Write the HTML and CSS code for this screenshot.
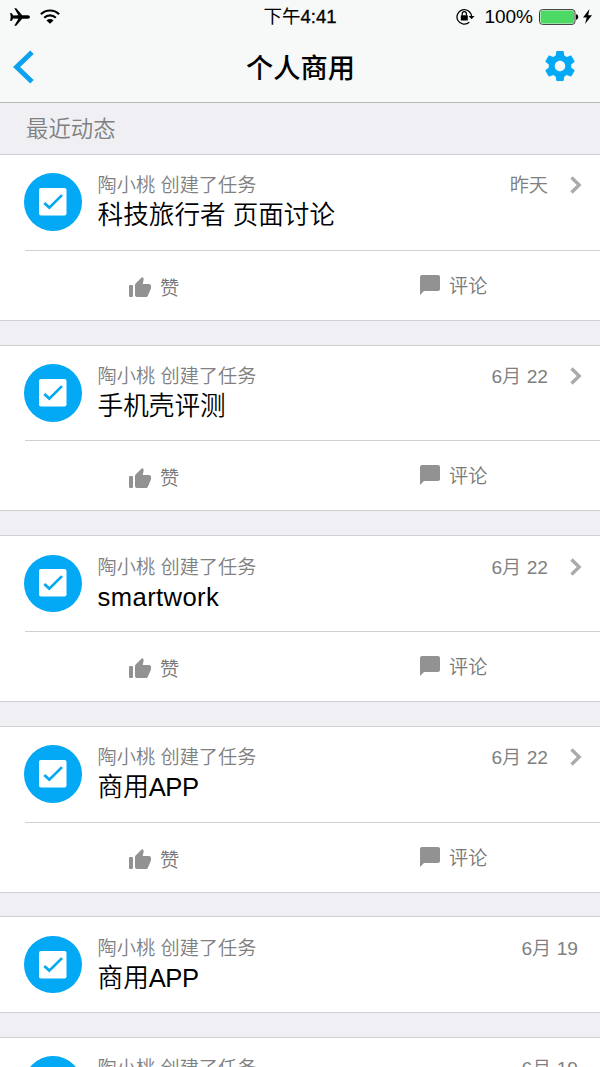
FILE: index.html
```html
<!DOCTYPE html>
<html lang="zh-CN">
<head>
    <meta charset="UTF-8">
    <meta name="viewport" content="width=device-width, initial-scale=1.0">
    <title>个人商用</title>
    <link rel="stylesheet" href="styles.css">
</head>
<body>
    <!-- Shared icons -->
    <svg class="sprite" width="0" height="0">
        <symbol id="icon-task" viewBox="0 0 28 28">
            <rect width="27.5" height="27.5" rx="2" fill="#fff"/>
            <path d="M5.3 14.900l5 4.700L23 7.100" fill="none" stroke="#03a9f4" stroke-width="2.700"/>
        </symbol>
        <symbol id="icon-like" viewBox="1 1 22 20">
            <path d="M2 9h2q1 0 1 1v10q0 1-1 1H2q-1 0-1-1V10q0-1 1-1zm21 1c0-1.100-.9-2-2-2h-6.310l.95-4.570.03-.32c0-.41-.17-.79-.44-1.060L14.170 1 7.590 7.590C7.220 7.950 7 8.450 7 9v10c0 1.100.9 2 2 2h9c.83 0 1.540-.5 1.840-1.220l3.020-7.050c.09-.23.14-.47.14-.73v-2z"/>
        </symbol>
        <symbol id="icon-comment" viewBox="2 2 20 20">
            <path d="M20 2H4c-1.100 0-2 .9-2 2v18l4-4h14c1.100 0 2-.9 2-2V4c0-1.100-.9-2-2-2z"/>
        </symbol>
        <symbol id="icon-arrow" viewBox="0 0 12 18">
            <path d="M1.500 1.500L9.200 9l-7.700 7.500" fill="none" stroke="#aaa" stroke-width="3.300"/>
        </symbol>
    </svg>

    <header class="header">
        <div class="status-bar">
            <div class="status-left">
                <svg class="plane" viewBox="0 0 20 18">
                    <path d="M.2 5h1.300l1.800 2.500 5.100-.2L4.300.2h1.900l6 7.100h5.700c1.200 0 2 .8 2 1.700s-.8 1.700-2 1.700h-5.700l-6 7.100H4.300l4.100-7.100-5.100-.2L1.500 13H.2l.5-4z"/>
                </svg>
                <svg class="wifi" viewBox="0 0 20 15">
                    <path d="M.9 5.200a13 13 0 0 1 18.200 0M4.200 8.700a8.300 8.300 0 0 1 11.600 0" fill="none" stroke="#000" stroke-width="2.200"/>
                    <path d="M6.500 11.400a5 5 0 0 1 7 0L10 14.800z"/>
                </svg>
            </div>
            <div class="status-time">下午<span>4:41</span></div>
            <div class="status-right">
                <svg class="lock" viewBox="0 0 19 17">
                    <path d="M13.300 14.200a7.300 7.300 0 1 1 2.300-5.700" fill="none" stroke="#000" stroke-width="1.300"/>
                    <path d="M12.700 8h5.800l-2.900 3.300z"/>
                    <rect x="4.800" y="7.200" width="7" height="5.300" rx=".5"/>
                    <path d="M6.200 7.500V5.800a2.100 2.100 0 0 1 4.200 0v1.700" fill="none" stroke="#000" stroke-width="1.200"/>
                </svg>
                <span class="percent">100%</span>
                <svg class="battery" viewBox="0 0 40 16">
                    <rect x=".5" y=".6" width="35.500" height="14.800" rx="3" fill="#fff" stroke="#333"/>
                    <rect x="1.500" y="1.600" width="33.500" height="12.800" rx="2" fill="#4cd964"/>
                    <path d="M37 5.300c1.500.2 2.200 1.200 2.200 2.700s-.7 2.500-2.200 2.700z"/>
                </svg>
                <svg class="bolt" viewBox="0 0 9 15">
                    <path d="M6.500 0L0 8.400h3.700L2 15l7-8.700H5.200z"/>
                </svg>
            </div>
        </div>
        <nav class="nav-bar">
            <svg class="back" viewBox="0 0 21 34">
                <path d="M19 2.200L3.600 17 19 31.800" fill="none" stroke="#0da2ee" stroke-width="5"/>
            </svg>
            <h1>个人商用</h1>
            <svg class="settings" viewBox="2 2 20 20">
                <path d="M19.430 12.980c.04-.32.07-.64.07-.98s-.03-.66-.07-.98l2.110-1.650c.19-.15.24-.42.12-.64l-2-3.460c-.12-.22-.39-.3-.61-.22l-2.490 1c-.52-.4-1.080-.73-1.690-.98l-.38-2.650C14.460 2.180 14.250 2 14 2h-4c-.25 0-.46.18-.49.42l-.38 2.650c-.61.25-1.170.59-1.690.98l-2.490-1c-.23-.09-.49 0-.61.22l-2 3.460c-.13.22-.07.49.12.64l2.110 1.650c-.04.32-.07.65-.07.98s.03.66.07.98l-2.110 1.650c-.19.15-.24.42-.12.64l2 3.460c.12.22.39.3.61.22l2.490-1c.52.4 1.080.73 1.690.98l.38 2.650c.03.24.24.42.49.42h4c.25 0 .46-.18.49-.42l.38-2.650c.61-.25 1.170-.59 1.690-.98l2.490 1c.23.09.49 0 .61-.22l2-3.460c.12-.22.07-.49-.12-.64l-2.110-1.650zM12 15.500c-1.930 0-3.500-1.570-3.500-3.500s1.570-3.500 3.500-3.500 3.500 1.570 3.500 3.500-1.570 3.500-3.500 3.500z"/>
            </svg>
        </nav>
    </header>

    <main>
        <h2 class="section-title">最近动态</h2>

        <article class="card">
            <div class="card-body">
                <div class="avatar"><svg><use href="#icon-task"/></svg></div>
                <div class="info">
                    <p class="meta">陶小桃 创建了任务</p>
                    <p class="title">科技旅行者 页面讨论</p>
                </div>
                <div class="date">昨天</div>
                <svg class="arrow"><use href="#icon-arrow"/></svg>
            </div>
            <div class="actions">
                <div class="like"><svg><use href="#icon-like"/></svg>赞</div>
                <div class="comment"><svg><use href="#icon-comment"/></svg>评论</div>
            </div>
        </article>

        <article class="card">
            <div class="card-body">
                <div class="avatar"><svg><use href="#icon-task"/></svg></div>
                <div class="info">
                    <p class="meta">陶小桃 创建了任务</p>
                    <p class="title">手机壳评测</p>
                </div>
                <div class="date">6月 22</div>
                <svg class="arrow"><use href="#icon-arrow"/></svg>
            </div>
            <div class="actions">
                <div class="like"><svg><use href="#icon-like"/></svg>赞</div>
                <div class="comment"><svg><use href="#icon-comment"/></svg>评论</div>
            </div>
        </article>

        <article class="card">
            <div class="card-body">
                <div class="avatar"><svg><use href="#icon-task"/></svg></div>
                <div class="info">
                    <p class="meta">陶小桃 创建了任务</p>
                    <p class="title latin">smartwork</p>
                </div>
                <div class="date">6月 22</div>
                <svg class="arrow"><use href="#icon-arrow"/></svg>
            </div>
            <div class="actions">
                <div class="like"><svg><use href="#icon-like"/></svg>赞</div>
                <div class="comment"><svg><use href="#icon-comment"/></svg>评论</div>
            </div>
        </article>

        <article class="card">
            <div class="card-body">
                <div class="avatar"><svg><use href="#icon-task"/></svg></div>
                <div class="info">
                    <p class="meta">陶小桃 创建了任务</p>
                    <p class="title">商用<span class="app">APP</span></p>
                </div>
                <div class="date">6月 22</div>
                <svg class="arrow"><use href="#icon-arrow"/></svg>
            </div>
            <div class="actions">
                <div class="like"><svg><use href="#icon-like"/></svg>赞</div>
                <div class="comment"><svg><use href="#icon-comment"/></svg>评论</div>
            </div>
        </article>

        <article class="card">
            <div class="card-body">
                <div class="avatar"><svg><use href="#icon-task"/></svg></div>
                <div class="info">
                    <p class="meta">陶小桃 创建了任务</p>
                    <p class="title">商用<span class="app">APP</span></p>
                </div>
                <div class="date">6月 19</div>
            </div>
        </article>

        <article class="card">
            <div class="card-body">
                <div class="avatar"><svg><use href="#icon-task"/></svg></div>
                <div class="info">
                    <p class="meta">陶小桃 创建了任务</p>
                </div>
                <div class="date">6月 19</div>
            </div>
        </article>
    </main>
</body>
</html>
```

FILE: styles.css
```css
:root {
    --blue: #03a9f4;
    --gray: #808080;
    --icon-gray: #929292;
    --bg-color: #efeff4;
    --line: #d0d0d3;
}

* {
    box-sizing: border-box;
}

body {
    margin: 0;
    height: 1067px;
    overflow: hidden;
    background-color: var(--bg-color);
    font-family: "Liberation Sans", "Noto Sans CJK SC", sans-serif;
    color: #000;
}

h1, h2, p {
    margin: 0;
}

svg {
    display: block;
    flex: none;
}

.sprite {
    position: absolute;
}

/* Header */
.header {
    height: 103px;
    background-color: #f7f8f8;
    border-bottom: 1px solid #b9b9bb;
}

.status-bar {
    display: grid;
    grid-template-columns: 1fr auto 1fr;
    align-items: center;
    height: 32px;
    padding: 0 8px 0 10px;
    font-size: 19px;
    line-height: 32px;
}

.status-left,
.status-right {
    display: flex;
    align-items: center;
}

.status-right {
    justify-content: flex-end;
}

.status-time {
    font-size: 18.5px;
    font-weight: 400;
    padding-top: 1px;
    margin-left: -2px;
}

.status-time span {
    -webkit-text-stroke: 0.3px #000;
}

.plane {
    width: 20px;
    height: 18px;
    margin-right: 10px;
}

.wifi {
    width: 20px;
    height: 15px;
}

.lock {
    width: 19px;
    height: 17px;
    margin-right: 9px;
}

.percent {
    margin-right: 6px;
    padding-top: 1px;
}

.battery {
    width: 40px;
    height: 16px;
    margin-right: 4px;
}

.bolt {
    width: 9px;
    height: 15px;
}

.nav-bar {
    display: grid;
    grid-template-columns: 1fr auto 1fr;
    align-items: center;
    height: 70px;
    padding: 0 25px 0 13px;
}

.nav-bar h1 {
    font-size: 27.2px;
    font-weight: 500;
    line-height: 40px;
    margin: 3px 0 0 13px;
}

.back {
    width: 21px;
    height: 34px;
}

.settings {
    width: 30px;
    height: 30px;
    fill: var(--blue);
    justify-self: end;
    margin-bottom: 3px;
}

.section-title {
    height: 51px;
    padding-left: 26px;
    font-size: 22.4px;
    font-weight: 350;
    line-height: 53px;
    color: var(--gray);
}

/* Activity cards */
.card {
    margin-bottom: 23.8px;
    background-color: #fff;
    border-top: 1px solid var(--line);
    border-bottom: 1px solid var(--line);
}

/* Runs off the bottom of the screen */
.card:last-child {
    margin-bottom: 0;
}

.card-body {
    display: flex;
    height: 94.8px;
    padding: 18.4px 18px 0 24px;
}

.avatar {
    display: flex;
    align-items: center;
    justify-content: center;
    width: 57.6px;
    height: 57.6px;
    border-radius: 50%;
    background-color: var(--blue);
}

.avatar svg {
    width: 28px;
    height: 28px;
}

.info {
    flex: 1;
    padding-left: 16px;
}

.meta,
.date {
    height: 25px;
    font-size: 19.2px;
    font-weight: 350;
    line-height: 25px;
    color: var(--gray);
}

.title {
    font-size: 25.6px;
    font-weight: 350;
    line-height: 35px;
}

.title.latin {
    letter-spacing: 0.4px;
}

.title .app {
    letter-spacing: -0.5px;
}

.date {
    margin-right: 4px;
}

.arrow {
    width: 12px;
    height: 18px;
    margin: 3px 0 0 18px;
}

.actions {
    display: flex;
    height: 70px;
    margin-left: 25px;
    border-top: 1px solid var(--line);
    font-size: 19.2px;
    font-weight: 350;
    line-height: 28px;
    color: #777;
    fill: var(--icon-gray);
}

.like,
.comment {
    display: flex;
    align-items: center;
    height: 28px;
    gap: 9px;
}

.like {
    width: 395px;
    margin-top: 24px;
    padding-left: 104px;
}

.like svg {
    width: 22px;
    height: 20px;
    margin-bottom: 3px;
}

.comment {
    margin-top: 22px;
}

.comment svg {
    width: 20px;
    height: 20px;
    margin-bottom: 4px;
}
```
